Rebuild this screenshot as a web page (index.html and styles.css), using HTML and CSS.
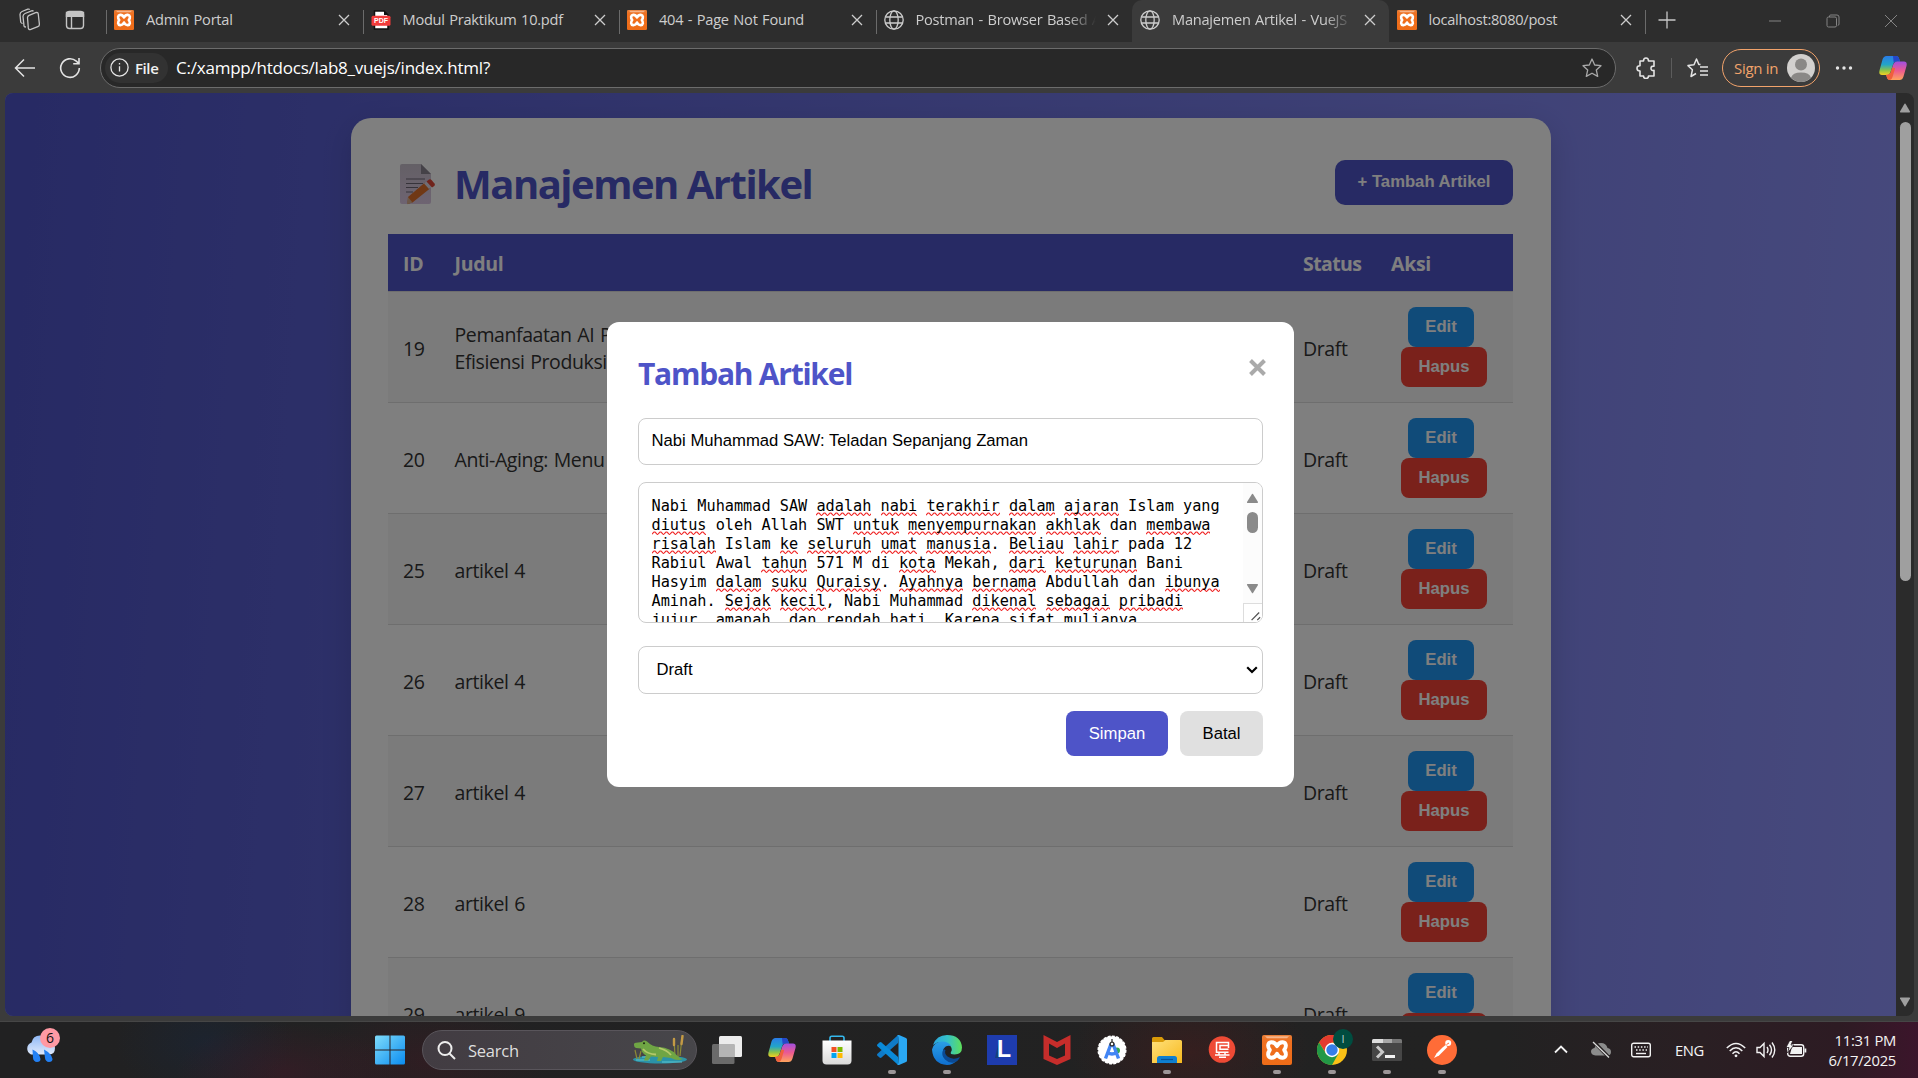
FILE: index.html
```html
<!DOCTYPE html>
<html lang="id">
<head>
<meta charset="utf-8">
<title>Manajemen Artikel - VueJS</title>
<link rel="stylesheet" href="styles.css">
</head>
<body>
<svg class="defs" width="0" height="0" aria-hidden="true">
  <defs>
    <linearGradient id="gXampp" x1="0" y1="0" x2="0" y2="1"><stop offset="0" stop-color="#e8803a"/><stop offset=".2" stop-color="#f07020"/><stop offset="1" stop-color="#ee6c18"/></linearGradient>
    <linearGradient id="gCopA" x1="0" y1="0" x2="0" y2="1"><stop offset="0" stop-color="#2a7be8"/><stop offset=".45" stop-color="#22a5c8"/><stop offset=".75" stop-color="#8bc34a"/><stop offset="1" stop-color="#f5d020"/></linearGradient>
    <linearGradient id="gCopB" x1="0" y1="0" x2="0" y2="1"><stop offset="0" stop-color="#a04fe0"/><stop offset=".5" stop-color="#ec5a90"/><stop offset="1" stop-color="#ffa45c"/></linearGradient>
    <linearGradient id="gWin" x1="0" y1="0" x2="1" y2="1"><stop offset="0" stop-color="#7fdcfb"/><stop offset="1" stop-color="#0a8cf0"/></linearGradient>
    <linearGradient id="gEdge" x1="0" y1="0" x2="1" y2="0"><stop offset="0" stop-color="#2aa5e0"/><stop offset=".5" stop-color="#35c1c8"/><stop offset="1" stop-color="#5ee05a"/></linearGradient>
    <linearGradient id="gEdgeB" x1="0" y1="0" x2="0" y2="1"><stop offset="0" stop-color="#2b9fe6"/><stop offset="1" stop-color="#0f6fd0"/></linearGradient>
    <linearGradient id="gFolder" x1="0" y1="0" x2="1" y2="1"><stop offset="0" stop-color="#ffe07a"/><stop offset="1" stop-color="#f7b91e"/></linearGradient>
    <linearGradient id="gCloud" x1="0" y1="0" x2="0" y2="1"><stop offset="0" stop-color="#8fb8f5"/><stop offset="1" stop-color="#dfe9fb"/></linearGradient>
    <linearGradient id="gStore" x1="0" y1="0" x2="0" y2="1"><stop offset="0" stop-color="#fff"/><stop offset="1" stop-color="#d9d9d9"/></linearGradient>
    <linearGradient id="gPage" x1="0" y1="0" x2="0" y2="1"><stop offset="0" stop-color="#c8c0cc"/><stop offset="1" stop-color="#dcc8e4"/></linearGradient>
    <symbol id="close" viewBox="0 0 12 12"><path d="M1 1l10 10M11 1L1 11" fill="none" stroke="currentColor" stroke-width="1.3"/></symbol>
    <symbol id="globe" viewBox="0 0 20 20"><g fill="none" stroke="currentColor" stroke-width="1.3"><circle cx="10" cy="10" r="9.2"/><ellipse cx="10" cy="10" rx="4.2" ry="9.2"/><path d="M1.5 7h17M1.5 13h17"/></g></symbol>
    <symbol id="xampp" viewBox="0 0 30 30"><rect width="30" height="30" rx="2" fill="url(#gXampp)"/><path d="M3 1.2h24l-2 2H5z" fill="#f6b48a"/><path d="M15 11.200C13 7.200 11 7.200 9.300 7.300C5.500 7.800 5.300 11.500 7.800 15C5.300 18.500 5.500 22.200 9.300 22.700C11 22.800 13 22.800 15 18.800C17 22.800 19 22.800 20.700 22.700C24.500 22.200 24.700 18.500 22.200 15C24.700 11.500 24.500 7.800 20.700 7.300C19 7.200 17 7.200 15 11.200Z" fill="none" stroke="#fff" stroke-width="3.900" stroke-linejoin="round"/></symbol>
    <symbol id="copilot" viewBox="0 0 28 26"><path d="M7.500 1H17q2.500 0 3.200 3l.8 2.500h-4q-2 0-2.800 2.500l-2.500 7.500Q10.500 20 8 20H3Q-.5 20 .5 15.500L3.500 4.500Q4.600 1 7.500 1Z" fill="url(#gCopA)"/><path d="M14 1h3q2.500 0 3.200 3l.8 2.500h-4q-1.500 0-2.300 1.300Z" fill="#2447c9"/><path d="M20.500 25H11q-2.500 0-3.200-3L7.200 19.800H9q2 0 2.800-2.500l2.500-8Q15.500 6.500 18 6.500h7q3.500 0 2.500 4.500l-3 10.500Q23.500 25 20.500 25Z" fill="url(#gCopB)"/><path d="M7.200 19.800H9q2 0 2.800-2.500l1.400-4.500 3 .2-2.700 9q-.6 2.500-2.500 3-2.500 0-3.200-3Z" fill="#f0603c"/></symbol>
  </defs>
</svg>

<div class="screen">
  <div class="tabstrip">
    <div class="strip-tools">
      <svg width="22" height="24" viewBox="0 0 22 24" fill="none" stroke="#c4c4c4" stroke-width="1.300"><path d="M8.500 9.500q.2-1.600 1.600-2.200l6.500-2.600q2.500-.8 2.700 1.500l1.100 10q.1 1.900-1.600 2.500l-7 2.700q-2.200.7-2.500-1.500Z"/><path d="M7 19l-1.400-.2q-.5-.3-.6-1L4 8.500Q4 6.300 6 5.500l6.500-2.600q1.200-.4 2 .3M3.600 15.500L2.500 15q-.7-.4-.8-1L1 6.500Q1 4.300 3 3.500L8.800 1.200q1.200-.4 2 .3"/></svg>
      <svg width="20" height="20" viewBox="0 0 20 20" fill="none" stroke="#c4c4c4" stroke-width="1.400"><rect x="1.500" y="1.500" width="17" height="17" rx="3"/><path d="M1.500 2.500h17v3.800h-17z" fill="#c4c4c4"/><path d="M6.500 6v12.500"/></svg>
    </div>
    <div class="tab tab-line"><svg class="fav"><use href="#xampp"/></svg><span class="tab-name">Admin Portal</span><svg class="x"><use href="#close"/></svg></div>
    <div class="tab tab-line"><svg class="fav" viewBox="0 0 20 20"><path d="M3.500 1h9.500l4 4v14H3.500z" fill="#fff" stroke="#111" stroke-width="1.500"/><path d="M13 1v4h4z" fill="#111"/><rect x=".5" y="5.800" width="19" height="10" rx="1.500" fill="#f23b3b"/><text class="pdf-label" x="10" y="13.300" text-anchor="middle">PDF</text></svg><span class="tab-name">Modul Praktikum 10.pdf</span><svg class="x"><use href="#close"/></svg></div>
    <div class="tab tab-line"><svg class="fav"><use href="#xampp"/></svg><span class="tab-name">404 - Page Not Found</span><svg class="x"><use href="#close"/></svg></div>
    <div class="tab tab-line"><svg class="fav"><use href="#globe"/></svg><span class="tab-name fade">Postman - Browser Based API</span><svg class="x"><use href="#close"/></svg></div>
    <div class="tab active"><svg class="fav"><use href="#globe"/></svg><span class="tab-name fade">Manajemen Artikel - VueJS</span><svg class="x"><use href="#close"/></svg></div>
    <div class="tab after"><svg class="fav"><use href="#xampp"/></svg><span class="tab-name">localhost:8080/post</span><svg class="x"><use href="#close"/></svg></div>
    <div class="newtab"><svg width="18" height="18" viewBox="0 0 18 18"><path d="M9 .5v17M.5 9h17" stroke="#c8c8c8" stroke-width="1.300"/></svg></div>
    <div class="winctl">
      <svg width="14" height="14"><path d="M1 7h12" stroke="#848484"/></svg>
      <svg width="14" height="14" fill="none" stroke="#848484"><rect x="1" y="3" width="9.500" height="10" rx="1.500"/><path d="M3.500 3V2q.2-1 1.200-1H11q2 0 2 2v7q0 1.300-1.300 1.500"/></svg>
      <svg width="14" height="14"><path d="M1 1l12 12M13 1L1 13" stroke="#848484"/></svg>
    </div>
  </div>

  <div class="toolbar">
    <svg class="back" width="22" height="20" viewBox="0 0 22 20" fill="none" stroke="#e4e4e4" stroke-width="1.500"><path d="M21 10H2M10 1.500L1.500 10l8.500 8.500"/></svg>
    <svg class="reload" width="22" height="22" viewBox="0 0 22 22" fill="none" stroke="#e4e4e4" stroke-width="1.600"><path d="M20.300 11a9.300 9.300 0 1 1-3-6.800L19.800 6.500M20 1v5.800h-5.800"/></svg>
    <div class="address">
      <div class="chip"><svg width="19" height="19" viewBox="0 0 19 19" fill="none" stroke="#e6e6e6" stroke-width="1.300"><circle cx="9.500" cy="9.500" r="8.600"/><path d="M9.500 8.300v5.200M9.500 5v1.600"/></svg><span>File</span></div>
      <span class="url">C:/xampp/htdocs/lab8_vuejs/index.html?</span>
      <svg class="star" width="20" height="20" viewBox="0 0 20 20" fill="none" stroke="#a8a8a8" stroke-width="1.300" stroke-linejoin="round"><path d="M10 1l2.700 6 6.300.7-4.700 4.300 1.400 6.400L10 15.200l-5.700 3.200L5.700 12 1 7.700 7.300 7z"/></svg>
    </div>
    <svg class="puzzle" width="20" height="22" viewBox="0 0 20 22" fill="none" stroke="#e4e4e4" stroke-width="1.600" stroke-linejoin="round"><path d="M4 4h3.500Q7.500 1 10 1t2.500 3H18v5.200q-3-.4-3 2.100t3 2.100V19h-5.500q0 2.500-2.500 2.500T7.500 19H4v-5Q1 14 1 11.300T4 8.700z"/></svg>
    <i class="sep"></i>
    <svg class="favs" width="22" height="20" viewBox="0 0 22 20" fill="none" stroke="#e4e4e4" stroke-width="1.500" stroke-linejoin="round"><path d="M13.500 6.600L11.800 6.500 9.500 1 7 6.800 1 7.600l4.400 4.200L4 18.500l5-3M13 9h8M13 13h8M13 17h8"/></svg>
    <div class="signin"><span>Sign in</span><svg width="28" height="28" viewBox="0 0 28 28"><circle cx="14" cy="14" r="14" fill="#d2d0ce"/><circle cx="14" cy="10.500" r="6" fill="#8a8886"/><path d="M4 23.800Q5.500 18.500 14 18.500T24 23.800A14 14 0 0 1 4 23.800Z" fill="#8a8886"/></svg></div>
    <svg class="more" width="18" height="4"><circle cx="2.500" cy="2" r="1.700" fill="#e4e4e4"/><circle cx="9" cy="2" r="1.700" fill="#e4e4e4"/><circle cx="15.500" cy="2" r="1.700" fill="#e4e4e4"/></svg>
    <svg class="cop" width="28" height="26"><use href="#copilot"/></svg>
  </div>

  <div class="frame">
    <div class="viewport">
      <div class="page">
        <div class="card">
          <header class="card-head">
            <h1><svg width="36" height="41" viewBox="0 0 36 41"><path d="M2 0H21l10 10v28q0 2-2 2H2Q0 40 0 38V2Q0 0 2 0Z" fill="url(#gPage)"/><path d="M21 0l10 10H21z" fill="#8a8490"/><path d="M6 15h19M6 19.500h17M6 23.500h12M6 28h7" stroke="#6c6674" stroke-width="1.200"/><path d="M8 33L25 18.500l5 6L12.500 38.500 7.500 40z" fill="#e0702a"/><path d="M24 19.500l3-2.500 5 5.500-3 2.500z" fill="#e0dce8"/><path d="M26.500 17.500l2.500-2q1.500-.8 2.500.4l3 3.600q1 1.300-.2 2.400L32 23.500z" fill="#e04838"/><path d="M8 33l4.500 5.500L7 40.300z" fill="#d8b090"/></svg><span>Manajemen Artikel</span></h1>
            <button class="btn-add">+ Tambah Artikel</button>
          </header>
          <table>
            <thead><tr><th class="c-id">ID</th><th>Judul</th><th class="c-status">Status</th><th class="c-aksi">Aksi</th></tr></thead>
            <tbody>
              <tr><td>19</td><td>Pemanfaatan AI P<br>Efisiensi Produksi</td><td>Draft</td><td><div class="acts"><button class="edit">Edit</button><button class="del">Hapus</button></div></td></tr>
              <tr><td>20</td><td>Anti-Aging: Menu</td><td>Draft</td><td><div class="acts"><button class="edit">Edit</button><button class="del">Hapus</button></div></td></tr>
              <tr><td>25</td><td>artikel 4</td><td>Draft</td><td><div class="acts"><button class="edit">Edit</button><button class="del">Hapus</button></div></td></tr>
              <tr><td>26</td><td>artikel 4</td><td>Draft</td><td><div class="acts"><button class="edit">Edit</button><button class="del">Hapus</button></div></td></tr>
              <tr><td>27</td><td>artikel 4</td><td>Draft</td><td><div class="acts"><button class="edit">Edit</button><button class="del">Hapus</button></div></td></tr>
              <tr><td>28</td><td>artikel 6</td><td>Draft</td><td><div class="acts"><button class="edit">Edit</button><button class="del">Hapus</button></div></td></tr>
              <tr><td>29</td><td>artikel 9</td><td>Draft</td><td><div class="acts"><button class="edit">Edit</button><button class="del">Hapus</button></div></td></tr>
            </tbody>
          </table>
        </div>
      </div>
      <div class="overlay">
        <div class="modal">
          <div class="modal-head"><h2>Tambah Artikel</h2><svg class="modal-x" width="17" height="17" viewBox="0 0 17 17"><path d="M1.500 1.500l14 14M15.500 1.500l-14 14" stroke="#aaa" stroke-width="4"/></svg></div>
          <div class="field title">Nabi Muhammad SAW: Teladan Sepanjang Zaman</div>
          <div class="field area">
            <div class="area-text">Nabi Muhammad SAW <u>adalah</u> <u>nabi</u> <u>terakhir</u> <u>dalam</u> <u>ajaran</u> Islam yang
<u>diutus</u> oleh Allah SWT <u>untuk</u> <u>menyempurnakan</u> <u>akhlak</u> dan <u>membawa</u>
<u>risalah</u> Islam <u>ke</u> <u>seluruh</u> <u>umat</u> <u>manusia</u>. <u>Beliau</u> <u>lahir</u> pada 12
Rabiul Awal <u>tahun</u> 571 M di <u>kota</u> Mekah, <u>dari</u> <u>keturunan</u> Bani
Hasyim <u>dalam</u> <u>suku</u> <u>Quraisy</u>. <u>Ayahnya</u> <u>bernama</u> Abdullah dan <u>ibunya</u>
Aminah. <u>Sejak</u> <u>kecil</u>, Nabi Muhammad <u>dikenal</u> <u>sebagai</u> <u>pribadi</u>
jujur, amanah, dan rendah hati. Karena sifat mulianya,</div>
            <div class="area-bar">
              <svg width="19" height="120" viewBox="0 0 19 120"><path d="M4 19l5-8q.5-.7 1 0l5 8q.2.900-.8.900H4.600Q3.600 19.900 4 19Z" fill="#8a8a8a"/><rect x="4" y="29" width="11" height="21" rx="5.500" fill="#8a8a8a"/><path d="M4 102l5 8q.5.700 1 0l5-8q.2-.9-.8-.9H4.600Q3.600 101.100 4 102Z" fill="#8a8a8a"/></svg>
              <svg class="grip" width="19" height="19" viewBox="0 0 19 19"><path d="M8 17l8-8M14 17l3-3" stroke="#555" stroke-width="1.400"/></svg>
            </div>
          </div>
          <div class="field select"><span>Draft</span><svg width="12" height="8" viewBox="0 0 12 8"><path d="M1.200 1.300L6 6l4.800-4.700" fill="none" stroke="#000" stroke-width="2.200"/></svg></div>
          <div class="modal-foot"><button class="save">Simpan</button><button class="cancel">Batal</button></div>
        </div>
      </div>
    </div>
    <div class="scrollbar">
      <svg width="12" height="10" viewBox="0 0 12 10"><path d="M1 8.500L5.500.8q.5-.6 1 0L11 8.500q.2 1-.7 1H1.700Q.7 9.500 1 8.500Z" fill="#9f9f9f"/></svg>
      <i class="thumb"></i>
      <svg width="12" height="10" viewBox="0 0 12 10"><path d="M1 1.500L5.500 9.200q.5.600 1 0L11 1.500q.2-1-.7-1H1.700Q.7.500 1 1.500Z" fill="#9f9f9f"/></svg>
    </div>
  </div>

  <div class="taskbar">
    <div class="weather">
      <svg width="36" height="40" viewBox="0 0 36 40"><path d="M6 28.500a6.500 6.500 0 0 1 .5-12Q8 9.500 15 9.500q6 0 8 5.500 7 .5 7 7 0 6.500-6 6.500Z" fill="url(#gCloud)"/><path d="M7.500 23.500q7 3 8 9.500 0 3-3.500 3-3.500-.3-4-4zM19 23.500q7.500 4 8.500 9.500 0 3-3.500 3-3.500-.3-4-4z" fill="#2381f5"/></svg>
      <span class="badge">6</span>
    </div>
    <div class="dock">
      <svg class="app" viewBox="0 0 30 30"><path d="M0 2Q0 .5 1.500.5h13v14H0zM15.500.5h13Q30 .5 30 2v12.500H15.500zM0 15.500h14.500v14h-13Q0 29.500 0 28zM15.500 15.500H30V28q0 1.500-1.500 1.500h-13z" fill="url(#gWin)"/></svg>
      <div class="search"><svg width="19" height="19" viewBox="0 0 19 19" fill="none" stroke="#ededed" stroke-width="2"><circle cx="8" cy="7.500" r="6.500"/><path d="M12.500 12.500l5.500 5.500"/></svg><span>Search</span>
        <svg class="croc" width="56" height="30" viewBox="0 0 56 30"><ellipse cx="28" cy="24.500" rx="27" ry="4" fill="#2b93a8"/><path d="M4 25h14M30 27h20M10 22h8" stroke="#5cc5d2" stroke-width="1.200"/><path d="M5 24L3 15M7 24l2-8M43 21L42 4M48 21L50 2M46 22V10" stroke="#8c8a35" stroke-width="1.200"/><path d="M42 10V4M49.500 9L50.500 1" stroke="#c39a45" stroke-width="2.400" stroke-linecap="round"/><path d="M2 10q-.5-2 2-2.300l6-.7q2-2.500 5-.5 5 5 12 5.500 12 1 17 7.500 4 4 7 4.500-6 2.500-12-1l-8-1-2 4h-4l1-4-7-.5-3 4h-4l2-5q-4-2-5-7l-5-.5q-2-.5-2-3Z" fill="#6fa544"/><path d="M11 14q4 5 13 5.500M27 13q8 2 12 7" fill="none" stroke="#b5c96a" stroke-width="1.800"/><circle cx="12" cy="8.200" r="1" fill="#1d2a10"/></svg></div>
      <svg class="app" viewBox="0 0 30 30"><rect x="7" y="1" width="23" height="21" rx="1.500" fill="#ececec"/><rect x="0" y="9" width="22.500" height="20" rx="1.500" fill="#777" fill-opacity=".85"/><path d="M7 9h15.500v13H7z" fill="#b4b4b4"/></svg>
      <svg class="app" viewBox="0 0 30 30"><use href="#copilot" x="1" y="2" width="28" height="26"/></svg>
      <svg class="app" viewBox="0 0 30 30"><path d="M8 7V3q0-1.700 1.700-1.700h10.600Q22 1.300 22 3v4" fill="none" stroke="#35b9ee" stroke-width="1.600"/><path d="M.5 5.500h29v20q0 4-4 4h-21q-4 0-4-4z" fill="url(#gStore)"/><path d="M9.500 12h5v5h-5z" fill="#f25022"/><path d="M15.500 12h5v5h-5z" fill="#7fba00"/><path d="M9.500 18h5v5h-5z" fill="#00a4ef"/><path d="M15.500 18h5v5h-5z" fill="#ffb900"/></svg>
      <div class="app run"><svg viewBox="0 0 30 30"><path d="M22 0l-1 8L4.500 22.500q-1 .8-2 0L.5 20.800q-1-1 0-2L20 1z" fill="#0f7bc8"/><path d="M22 30l-1-8L4.500 7.500q-1-.8-2 0L.5 9.200q-1 1 0 2L20 29z" fill="#0a8ad8"/><path d="M22 0l7 3q1 .5 1 1.500v21q0 1-1 1.500l-7 3q-1 .2-2-1 1.500.5 1.500-1.200V2.200Q21.500.5 20 1q1-1.200 2-1Z" fill="#2aa8f4"/></svg></div>
      <div class="app run"><svg viewBox="0 0 30 30"><path d="M1 10Q4.500 0 15 0q14 0 15 12.500 0 7-7.500 7-5 0-3.500-2.500 2-3-1-6.500Q9 4 1 10Z" fill="url(#gEdge)"/><path d="M0 14.500Q2 6.500 10.500 6.500q6 0 8.500 4.500-5-1.500-7.500 3-2 5 1.500 9.500 4.500 5 12.500 1.500Q21 30 15 30 1 29 0 14.500Z" fill="url(#gEdgeB)"/><path d="M11.500 14q-3 6 1.500 10.500 4 4 9 3 4-1 6-5.500-7 3.500-12.500-.5-3.500-3-2-6.500Z" fill="#0b4a94"/></svg></div>
      <svg class="app" viewBox="0 0 30 30"><rect width="30" height="30" fill="#1e3cae"/><path d="M12 5v18h-4z" fill="#16407c"/><text class="l-mark" x="10" y="22">L</text></svg>
      <svg class="app" viewBox="0 0 30 30"><path d="M1.500 0L15 7 28.500 0v24L15 30 1.500 24zM7 8.500v12L15 24l8-3.500v-12L15 13z" fill="#c62d2b" fill-rule="evenodd"/></svg>
      <svg class="app" viewBox="0 0 30 30"><circle cx="15" cy="15" r="13.800" fill="#fff" stroke="#fff" stroke-width="1.500" stroke-dasharray="3 1.300"/><circle cx="20" cy="15.500" r="3" fill="#34a853"/><path d="M14 9L8.500 23.500M16 9l5.500 14.500M10.500 17.500q4.500 3 9 0" fill="none" stroke="#4285f4" stroke-width="3.400"/><circle cx="15" cy="9" r="1.900" fill="#fff" stroke="#333" stroke-width="1.400"/><path d="M15 4v3" stroke="#333" stroke-width="1.300"/></svg>
      <div class="app run"><svg viewBox="0 0 30 30"><path d="M0 3.500Q0 2 1.500 2H10l2.500 3H28v6H0z" fill="#d99a08"/><path d="M0 7h11l2.500-2H28.500Q30 5 30 6.500V28H0z" fill="url(#gFolder)"/><path d="M5 28v-4.500q0-2.500 2.500-2.500h15q2.500 0 2.500 2.500V28z" fill="#0f7fd0"/><path d="M9 24.500h12" stroke="#07539a" stroke-width="1.200"/></svg></div>
      <svg class="app" viewBox="0 0 30 30"><circle cx="15" cy="14.500" r="13.300" fill="#ee4a35"/><path d="M21.500 13V7.500H9.500v9.800H21.500M21.500 10.500h-8.500v3.800h8.500M8 20h14.500M12 17.500v2.500M18 17.500v2.500M12 22.300h7" fill="none" stroke="#fff" stroke-width="1.500"/></svg>
      <div class="app run"><svg viewBox="0 0 30 30"><use href="#xampp"/></svg></div>
      <div class="app run"><svg class="chrome" viewBox="0 0 30 30"><circle cx="15" cy="15" r="15" fill="#fbc116"/><path d="M2 7.500A15 15 0 0 1 28 7.500H15L9 18z" fill="#e33b2e"/><path d="M2 7.500A15 15 0 0 0 15 30l6.500-11.500H9z" fill="#229846"/><circle cx="15" cy="15" r="7.200" fill="#fff"/><circle cx="15" cy="15" r="5.700" fill="#357ee8"/></svg><span class="profile">I</span></div>
      <div class="app run"><svg viewBox="0 0 30 30"><rect y="4" width="30" height="22" rx="1.500" fill="#464646"/><path d="M0 8V5.500Q0 4 1.500 4H11v4z" fill="#ddd"/><path d="M11 4h9v4h-9z" fill="#a8a8a8"/><path d="M20 4h8.500Q30 4 30 5.500V8H20z" fill="#777"/><path d="M5 11.500l5.500 5.500L5 22.500" fill="none" stroke="#c9c9c9" stroke-width="3"/><path d="M13 21.500h10" stroke="#f2f2f2" stroke-width="3"/></svg></div>
      <div class="app run"><svg viewBox="0 0 30 30"><circle cx="15" cy="15" r="15" fill="#ff6c37"/><path d="M15.500 12.500l3-2.500 2 2L12 20.500l-5 2.500 2.500-4.500z" fill="#fff"/><circle cx="21.200" cy="8" r="3" fill="#fff"/><path d="M19.500 9.500l2.500-1.500" stroke="#ff6c37"/></svg></div>
    </div>
    <div class="tray">
      <svg class="t-up" width="14" height="9" viewBox="0 0 14 9"><path d="M1 7.500l6-6 6 6" fill="none" stroke="#f2f2f2" stroke-width="1.800"/></svg>
      <svg class="t-cloud" width="20" height="17" viewBox="0 0 20 17"><path d="M4.500 14.500Q0 14 0 10.500 0 7.500 3.500 7 5 2 10 2t6.500 5Q20 7.500 20 11q0 3.500-4 3.500Z" fill="#8c8c8c"/><path d="M3 1l15 15.500" stroke="#262122" stroke-width="3.500"/><path d="M2 1l16 15.500" stroke="#dcdcdc" stroke-width="1.300"/></svg>
      <svg class="t-key" width="20" height="16" viewBox="0 0 20 16" fill="none" stroke="#f2f2f2" stroke-width="1.400"><rect x=".7" y="1.200" width="18.600" height="13.600" rx="2"/><path d="M3.500 5h13.500M5 8h11" stroke-dasharray="1.500 1.700"/><path d="M5 11.500h10"/></svg>
      <span class="t-lang">ENG</span>
      <svg class="t-wifi" width="20" height="16" viewBox="0 0 20 16" fill="none" stroke="#f2f2f2" stroke-width="1.500"><path d="M.8 6Q10-3 19.200 6M3.700 9Q10 2.500 16.300 9M6.500 11.700Q10 8 13.500 11.700"/><circle cx="10" cy="13.800" r="1.400" fill="#f2f2f2" stroke="none"/></svg>
      <svg class="t-vol" width="20" height="18" viewBox="0 0 20 18" fill="none" stroke="#f2f2f2" stroke-width="1.400"><path d="M1 6.500h3L8 2.500v13l-4-4H1zM11 6q2 3 0 6M13.500 3.800q4 5.200 0 10.400M16 1.500q5.500 7.500 0 15"/></svg>
      <svg class="t-bat" width="21" height="17" viewBox="0 0 21 17"><rect x="1.700" y="3.700" width="16" height="11.600" rx="2.500" fill="none" stroke="#f2f2f2" stroke-width="1.400"/><path d="M6 6h10v7H4zM18.500 7.500h1.800v4h-1.800z" fill="#f2f2f2"/><path d="M4-1L0 6.500h3L1.500 12 8 4H5L7-1z" fill="#f2f2f2" stroke="#2a2024" stroke-width=".8"/></svg>
      <div class="clock"><span>11:31 PM</span><span>6/17/2025</span></div>
    </div>
  </div>
</div>
</body>
</html>
```

FILE: styles.css
```css
* { box-sizing: border-box; }

body {
  margin: 0;
  font-family: "Open Sans", "Noto Sans", sans-serif;
  background: #3b3b3b;
  overflow: hidden;
}

.defs { position: absolute; }
svg { display: block; flex: none; }

button { border: 0; padding: 0; font-family: "Liberation Sans", Arial, sans-serif; }

.screen {
  width: 1918px;
  height: 1078px;
  display: flex;
  flex-direction: column;
  background: #3b3b3b;
}

/* Tab strip */
.tabstrip {
  height: 42px;
  display: flex;
  background: #2d2d2d;
  flex: none;
}

.strip-tools {
  width: 106px;
  padding: 0 21px 3px 19px;
  display: flex;
  align-items: center;
  justify-content: space-between;
}

.tab {
  width: 256.500px;
  height: 42px;
  padding: 0 13px 2px 8px;
  display: flex;
  align-items: center;
  color: #cdcdcd;
  font-size: 14.600px;
}

.tab-line {
  background: linear-gradient(#6b6b6b, #6b6b6b) 0 10px / 1px 24px no-repeat;
}

.tab.active { background: #3b3b3b; border-radius: 10px 10px 0 0; }
.tab.after { background: #2d2d2d; }

.fav { width: 20px; height: 20px; }
.x { width: 12px; height: 12px; }

.tab-name {
  flex: 1;
  margin: 0 11px 0 12px;
  padding-bottom: 2px;
  white-space: nowrap;
  overflow: hidden;
  letter-spacing: -0.250px;
  word-spacing: 1px;
}

.fade {
  -webkit-mask-image: linear-gradient(to right, #000 84%, transparent 100%);
  mask-image: linear-gradient(to right, #000 84%, transparent 100%);
}

.pdf-label { font: bold 7px "Liberation Sans", sans-serif; fill: #fff; }

.newtab {
  width: 44px;
  display: flex;
  align-items: center;
  justify-content: center;
  padding-bottom: 3px;
  background: linear-gradient(#6b6b6b, #6b6b6b) 0 10px / 1px 24px no-repeat;
}

.winctl {
  margin-left: auto;
  padding-right: 20px;
  display: flex;
  align-items: center;
  gap: 44px;
}

/* Toolbar */
.toolbar {
  height: 51px;
  display: flex;
  align-items: center;
  padding: 0 11px 0 14px;
  flex: none;
}

.reload { margin-left: 23px; }

.address {
  width: 1516px;
  height: 40px;
  margin-left: 19px;
  border: 1px solid #6c6c6c;
  border-radius: 20px;
  background: #282828;
  display: flex;
  align-items: center;
  padding: 0 13px 0 4px;
}

.chip {
  width: 63px;
  height: 30px;
  border-radius: 15px;
  background: #323232;
  display: flex;
  align-items: center;
  padding-left: 5px;
  gap: 6px;
  color: #f0f0f0;
  font-size: 15px;
  font-weight: 600;
  letter-spacing: -0.400px;
}

.url {
  margin-left: 8px;
  color: #fff;
  font-size: 17px;
  letter-spacing: -0.220px;
  flex: 1;
}

.puzzle { margin-left: 20px; }
.sep { width: 1px; height: 20px; background: #5c5c5c; margin-left: 15px; }
.favs { margin-left: 15px; }

.signin {
  width: 98px;
  height: 38px;
  margin-left: 13px;
  border: 1.500px solid #f2a36b;
  border-radius: 19px;
  display: flex;
  align-items: center;
  justify-content: space-between;
  padding: 0 4px 0 11px;
  color: #f2a36b;
  font-size: 15px;
  letter-spacing: -0.300px;
  white-space: nowrap;
}

.more { margin-left: 15px; }
.cop { margin-left: auto; }

/* Browser viewport */
.frame {
  height: 923px;
  margin: 0 4px 0 5px;
  display: flex;
  flex: none;
  border-radius: 8px;
  overflow: hidden;
}

.viewport {
  position: relative;
  width: 1891px;
  height: 923px;
  overflow: hidden;
}

.page {
  padding: 25px 0 0 346px;
  background: linear-gradient(94deg, #4e54c8, #8f94fb);
}

.card {
  width: 1200px;
  padding: 42px 38px 60px 37px;
  background: #fff;
  border-radius: 20px;
  box-shadow: 0 10px 30px rgba(0, 0, 0, 0.150);
}

.card-head {
  height: 45px;
  margin-bottom: 29px;
  display: flex;
  align-items: center;
  justify-content: space-between;
}

h1 {
  margin: 3px 0 0 12px;
  display: flex;
  align-items: center;
  gap: 18px;
  color: #4e54c8;
  font-size: 40px;
  line-height: 45px;
  letter-spacing: -1.500px;
}

h1 span { padding-bottom: 2px; }

.btn-add {
  width: 178px;
  height: 45px;
  border-radius: 10px;
  background: #4e54c8;
  color: #fff;
  font-size: 16.670px;
  font-weight: bold;
  padding-bottom: 2px;
}

table {
  width: 1125px;
  table-layout: fixed;
  border-collapse: separate;
  border-spacing: 0;
  color: #333;
  font-size: 19.500px;
  line-height: 27px;
}

th {
  height: 58px;
  padding: 2px 15px 0;
  border-bottom: 1px solid #ddd;
  background: #4e54c8;
  background-clip: padding-box;
  color: #fff;
  text-align: left;
  letter-spacing: -0.300px;
}

th.c-id { width: 51.500px; }
th.c-status { width: 87px; letter-spacing: -0.600px; }
th.c-aksi { width: 138px; padding-left: 16px; }

td {
  height: 111px;
  padding: 2px 0 0 15px;
  border-bottom: 1px solid #ddd;
  white-space: nowrap;
  letter-spacing: -0.400px;
  word-spacing: 1px;
}

td:last-child { padding-top: 0; }

tbody tr:nth-child(odd) { background: #f7f7f7; }

.acts {
  width: 108px;
  display: flex;
  flex-direction: column;
  align-items: center;
}

.acts button {
  height: 40px;
  border-radius: 8px;
  color: #fff;
  font-size: 16.670px;
  font-weight: bold;
}

.acts .edit { width: 66px; margin-right: 6px; background: #2196f3; }
.acts .del { width: 86px; background: #f44336; }

.overlay {
  position: absolute;
  inset: 0;
  display: flex;
  align-items: center;
  justify-content: center;
  background: rgba(0, 0, 0, 0.500);
}

.modal {
  width: 687px;
  height: 465px;
  padding: 33px 31px 31px;
  border-radius: 12px;
  background: #fff;
  font-family: "Liberation Sans", Arial, sans-serif;
  font-size: 16.670px;
  color: #000;
}

.modal-head {
  display: flex;
  justify-content: space-between;
  height: 63px;
}

h2 {
  margin: -1px 0 0;
  color: #4e54c8;
  font: bold 30px/40px "Open Sans", "Noto Sans", sans-serif;
  letter-spacing: -1.250px;
}

.modal-x { margin: 4px -3px 0 0; }

.field {
  border: 1px solid #ccc;
  border-radius: 8px;
  background: #fff;
  display: flex;
}

.title { height: 47px; padding: 0 12.500px 1px; align-items: center; }

.area {
  height: 141px;
  margin: 17px 0 23px;
  overflow: hidden;
  justify-content: space-between;
}

.area-text {
  padding: 14px 0 0 12.500px;
  font: 15.220px/19px "DejaVu Sans Mono", "Liberation Mono", monospace;
  white-space: pre;
}

.area-text u {
  padding-bottom: 1px;
  text-decoration: none;
  background: url("data:image/svg+xml,%3Csvg xmlns='http://www.w3.org/2000/svg' width='6' height='4'%3E%3Cpath d='M-1 4L2 1 3 1 6 4 7 4' fill='none' stroke='%23f02828' stroke-width='1.200'/%3E%3C/svg%3E") 0 100% repeat-x;
}

.area-bar { width: 19px; background: #fcfcfc; }
.grip { background: #fff; border: 1px solid #ddd; border-width: 1px 0 0 1px; }

.select {
  height: 48px;
  padding: 0 4px 0 17.500px;
  align-items: center;
  justify-content: space-between;
}

.modal-foot {
  margin-top: 17px;
  display: flex;
  justify-content: flex-end;
  gap: 12px;
}

.modal-foot button { height: 45px; border-radius: 8px; font-size: 16.670px; }
.save { width: 102px; background: #4e54c8; color: #fff; }
.cancel { width: 83px; background: #e0e0e0; color: #000; }

.scrollbar {
  width: 18px;
  padding: 10px 0 9px;
  background: #2b2b2b;
  display: flex;
  flex-direction: column;
  align-items: center;
}

.thumb {
  width: 11px;
  height: 459px;
  margin: 9px 0 auto;
  border-radius: 5.500px;
  background: #9f9f9f;
}

/* Taskbar */
.taskbar {
  height: 57px;
  margin-top: auto;
  border-top: 1px solid #464646;
  display: flex;
  background:
    radial-gradient(ellipse 110px 50px at 285px 50px, rgba(90, 20, 45, 0.300), transparent),
    radial-gradient(ellipse 90px 60px at 205px 20px, rgba(20, 40, 70, 0.350), transparent),
    radial-gradient(ellipse 120px 60px at 430px 40px, rgba(80, 20, 35, 0.300), transparent),
    radial-gradient(ellipse 120px 70px at 1190px 30px, rgba(90, 25, 25, 0.350), transparent),
    linear-gradient(to right, #212122 0, #222 1500px, #2a1f23 1700px, #2d1b23 1840px, #3c152b 1918px);
}

.weather { position: relative; width: 375px; padding: 4px 0 0 25px; }

.badge {
  position: absolute;
  left: 40px;
  top: 6px;
  width: 20px;
  height: 20px;
  border-radius: 50%;
  background: #ff99a4;
  color: #111;
  font-size: 14px;
  line-height: 20px;
  text-align: center;
}

.dock {
  display: flex;
  align-items: center;
  gap: 25px;
}

.app { width: 30px; height: 30px; position: relative; }
.app svg { width: 30px; height: 30px; }

.run::after {
  content: "";
  position: absolute;
  left: 11px;
  top: 35px;
  width: 8px;
  height: 4px;
  border-radius: 2px;
  background: #9c9698;
}

.search {
  width: 275px;
  height: 40px;
  margin: 0 -10px 0 -8px;
  border: 1px solid #59555b;
  border-radius: 20px;
  background: linear-gradient(to right, #423c42, #47464a);
  display: flex;
  align-items: center;
  padding: 0 8px 0 14px;
  color: #dedede;
  font-size: 16.500px;
  letter-spacing: -0.250px;
}

.search span { margin: 0 auto 0 12px; }

.l-mark { font: bold 23px "Liberation Sans", sans-serif; fill: #fff; }

.profile {
  position: absolute;
  left: 16px;
  top: -6px;
  width: 20px;
  height: 20px;
  border-radius: 50%;
  background: #004d40;
  color: #b9cfcb;
  font-size: 11px;
  line-height: 20px;
  text-align: center;
}

.tray {
  margin-left: auto;
  padding: 0 22px 1px 0;
  display: flex;
  align-items: center;
  color: #f4f4f4;
  font-size: 14.800px;
}

.t-cloud { margin-left: 23px; }
.t-key { margin-left: 20px; }
.t-lang { width: 51px; margin-left: 24px; letter-spacing: -0.400px; }
.t-vol { margin-left: 10px; }
.t-bat { margin-left: 10px; }

.clock {
  width: 89px;
  display: flex;
  flex-direction: column;
  align-items: flex-end;
  line-height: 20px;
  letter-spacing: -0.300px;
}
```
